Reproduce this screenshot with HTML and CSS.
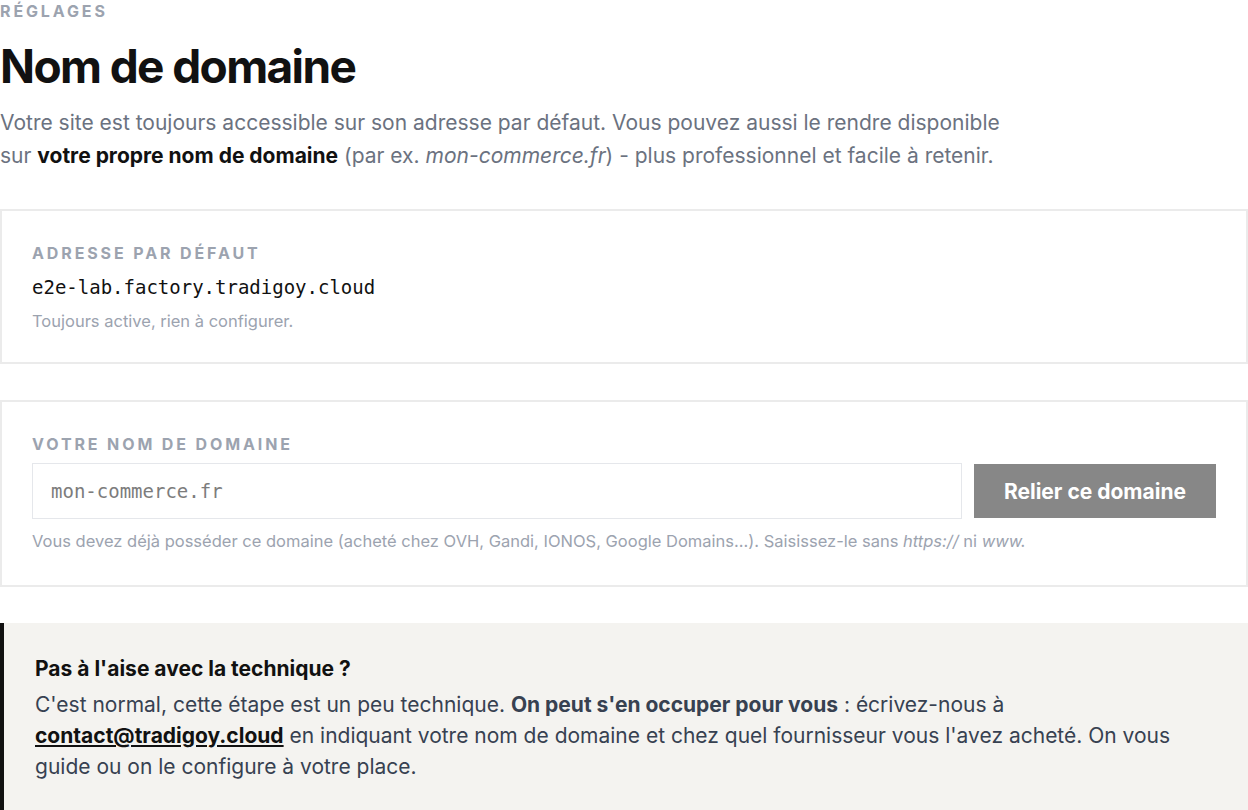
FILE: index.html
```html
<!DOCTYPE html>
<html lang="fr">
<head>
    <meta charset="UTF-8">
    <meta name="viewport" content="width=device-width, initial-scale=1.0">
    <title>Réglages - Nom de domaine</title>
    <link rel="stylesheet" href="styles.css">
</head>
<body>
    <main class="page">
        <div class="eyebrow">Réglages</div>
        <h1 class="title">Nom de domaine</h1>
        <p class="lead">
            Votre site est toujours accessible sur son adresse par défaut. Vous pouvez aussi le rendre disponible
            sur <strong>votre propre nom de domaine</strong> (par ex. <em>mon-commerce.fr</em>) - plus professionnel et facile à retenir.
        </p>

        <section class="card">
            <div class="card-label">Adresse par défaut</div>
            <div class="mono-value">e2e-lab.factory.tradigoy.cloud</div>
            <p class="hint">Toujours active, rien à configurer.</p>
        </section>

        <section class="card card-form">
            <label class="card-label" for="domain">Votre nom de domaine</label>
            <div class="domain-row">
                <input type="text" id="domain" class="domain-input" placeholder="mon-commerce.fr">
                <button class="btn-link" disabled>Relier ce domaine</button>
            </div>
            <p class="hint hint-form">Vous devez déjà posséder ce domaine (acheté chez OVH, Gandi, IONOS, Google Domains...). Saisissez-le sans <em>https://</em> ni <em>www.</em></p>
        </section>

        <aside class="callout">
            <h2 class="callout-title">Pas à l'aise avec la technique ?</h2>
            <p class="callout-text">
                C'est normal, cette étape est un peu technique. <strong>On peut s'en occuper pour vous</strong> : écrivez-nous à
                <a href="mailto:contact@tradigoy.cloud">contact@tradigoy.cloud</a> en indiquant votre nom de domaine et chez quel fournisseur vous l'avez acheté. On vous guide ou on le configure à votre place.
            </p>
        </aside>
    </main>
</body>
</html>
```

FILE: styles.css
```css
* {
    margin: 0;
    padding: 0;
    box-sizing: border-box;
}

body {
    font-family: Inter, 'Noto Sans', sans-serif;
    background: white;
    color: #111;
}

.page {
    padding-top: 1px;
}

.eyebrow {
    font-size: 16px;
    line-height: 20px;
    font-weight: 700;
    letter-spacing: 0.18em;
    text-transform: uppercase;
    color: #9ca3af;
}

.title {
    margin-top: 17px;
    font-size: 46px;
    line-height: 56px;
    font-weight: 700;
    letter-spacing: -0.035em;
    color: #111;
}

.lead {
    margin-top: 12px;
    max-width: 1020px;
    font-size: 21px;
    line-height: 33px;
    color: #6b7280;
}

.lead strong {
    color: #111;
    font-weight: 700;
}

.card {
    margin-top: 37px;
    padding: 32px 30px 30px;
    border: 2px solid #ebebeb;
    background: white;
}

.card-form {
    margin-top: 36px;
    padding-top: 32px;
    padding-bottom: 33px;
}

.card-label {
    display: block;
    font-size: 16px;
    line-height: 20px;
    font-weight: 700;
    letter-spacing: 0.18em;
    text-transform: uppercase;
    color: #9ca3af;
}

.mono-value {
    margin-top: 10px;
    font-family: 'DejaVu Sans Mono', monospace;
    font-size: 19px;
    line-height: 28px;
    color: #111;
}

.hint {
    margin-top: 9px;
    font-size: 16.5px;
    line-height: 22px;
    color: #9ca3af;
}

.hint-form {
    margin-top: 11px;
}

.domain-row {
    display: flex;
    align-items: center;
    gap: 12px;
    margin-top: 9px;
}

.domain-input {
    flex: 1;
    height: 56px;
    padding: 0 18px;
    border: 1px solid #e5e7eb;
    background: white;
    font-family: 'DejaVu Sans Mono', monospace;
    font-size: 19px;
    color: #111;
}

.domain-input::placeholder {
    color: #7c7c7c;
}

.domain-input:focus {
    outline: none;
    border-color: #111;
}

.btn-link {
    height: 54px;
    padding: 0 30px;
    border: none;
    background: #878787;
    color: white;
    font-family: Inter, 'Noto Sans', sans-serif;
    font-size: 21px;
    font-weight: 700;
    cursor: pointer;
}

.btn-link:disabled {
    cursor: not-allowed;
}

.callout {
    margin-top: 36px;
    padding: 32px 48px 30px 31px;
    border-left: 4px solid #111;
    background: #f4f3f0;
}

.callout-title {
    font-size: 21px;
    line-height: 28px;
    font-weight: 700;
    color: #111;
}

.callout-text {
    margin-top: 6px;
    font-size: 21px;
    line-height: 31px;
    color: #374151;
}

.callout-text strong {
    font-weight: 700;
}

.callout-text a {
    color: #111;
    font-weight: 700;
    text-decoration: underline;
}
```
